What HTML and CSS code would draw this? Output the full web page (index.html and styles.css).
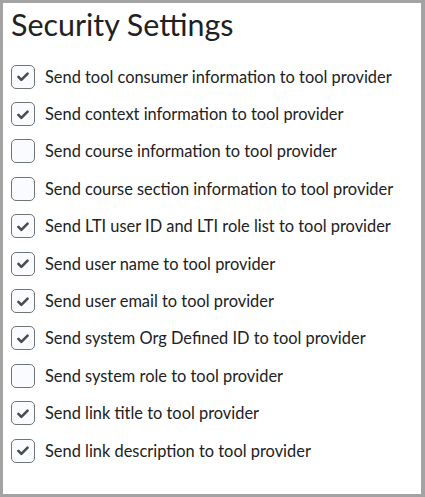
FILE: index.html
```html
<!DOCTYPE html>
<html>
<head>
<meta charset="utf-8">
<link rel="stylesheet" href="styles.css">
</head>
<body>
<div class="panel">
  <h1 class="title">Security Settings</h1>
  <ul class="list">
    <li class="item"><span class="box checked"><svg viewBox="0 0 24 24"><path d="M7 12.5l3.2 3.2L17 8.8"/></svg></span><span class="label">Send tool consumer information to tool provider</span></li>
    <li class="item"><span class="box checked"><svg viewBox="0 0 24 24"><path d="M7 12.5l3.2 3.2L17 8.8"/></svg></span><span class="label">Send context information to tool provider</span></li>
    <li class="item"><span class="box"></span><span class="label">Send course information to tool provider</span></li>
    <li class="item"><span class="box"></span><span class="label">Send course section information to tool provider</span></li>
    <li class="item"><span class="box checked"><svg viewBox="0 0 24 24"><path d="M7 12.5l3.2 3.2L17 8.8"/></svg></span><span class="label">Send LTI user ID and LTI role list to tool provider</span></li>
    <li class="item"><span class="box checked"><svg viewBox="0 0 24 24"><path d="M7 12.5l3.2 3.2L17 8.8"/></svg></span><span class="label">Send user name to tool provider</span></li>
    <li class="item"><span class="box checked"><svg viewBox="0 0 24 24"><path d="M7 12.5l3.2 3.2L17 8.8"/></svg></span><span class="label">Send user email to tool provider</span></li>
    <li class="item"><span class="box checked"><svg viewBox="0 0 24 24"><path d="M7 12.5l3.2 3.2L17 8.8"/></svg></span><span class="label">Send system Org Defined ID to tool provider</span></li>
    <li class="item"><span class="box"></span><span class="label">Send system role to tool provider</span></li>
    <li class="item"><span class="box checked"><svg viewBox="0 0 24 24"><path d="M7 12.5l3.2 3.2L17 8.8"/></svg></span><span class="label">Send link title to tool provider</span></li>
    <li class="item"><span class="box checked"><svg viewBox="0 0 24 24"><path d="M7 12.5l3.2 3.2L17 8.8"/></svg></span><span class="label">Send link description to tool provider</span></li>
  </ul>
</div>
</body>
</html>
```
FILE: styles.css
```css
html, body {
  margin: 0;
  padding: 0;
  background: #ffffff;
}
.panel {
  box-sizing: border-box;
  width: 425px;
  height: 497px;
  border: 3px solid #a3a3a3;
  border-right-width: 4px;
  padding: 0 8px;
  font-family: Lato, "Liberation Sans", sans-serif;
  color: #202122;
}
.title {
  margin: 0;
  padding-top: 3px;
  font-size: 30.4px;
  font-weight: 400;
  line-height: 36px;
  letter-spacing: 0;
}
.list {
  list-style: none;
  margin: 16px 0 0;
  padding: 0;
}
.item {
  display: flex;
  align-items: center;
  gap: 10px;
  height: 37.4px;
}
.box {
  box-sizing: border-box;
  width: 24px;
  height: 24px;
  flex: none;
  border: 1px solid #6e7477;
  border-radius: 5px;
  background: #f9fbff;
  display: flex;
  align-items: center;
  justify-content: center;
}
.box svg {
  width: 23px;
  height: 23px;
  fill: none;
  stroke: #494c4e;
  stroke-width: 2.8;
  stroke-linecap: round;
  stroke-linejoin: round;
}
.label {
  font-size: 16.4px;
  line-height: 20px;
}
```
